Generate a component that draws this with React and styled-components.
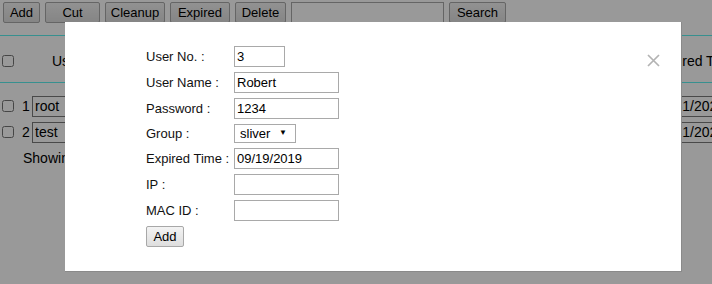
import React from "react";
import styled, { createGlobalStyle } from "styled-components";

const GlobalStyle = createGlobalStyle`
  html, body {
    margin: 0;
    padding: 0;
    background: #fff;
    overflow: hidden;
  }
  body {
    font-family: "Liberation Sans", Arial, sans-serif;
    font-size: 13px;
    color: #000;
  }
  * {
    box-sizing: border-box;
  }
`;

const users = [
  { no: 1, name: "root", expired: "12/31/2020" },
  { no: 2, name: "test", expired: "12/31/2020" },
];

const App = () => {
  return (
    <>
      <GlobalStyle />
      <Page>
        <Toolbar>
          <Button $w={37}>Add</Button>
          <Button $w={55}>Cut</Button>
          <Button $w={60}>Cleanup</Button>
          <Button $w={60}>Expired</Button>
          <Button $w={51}>Delete</Button>
          <SearchInput defaultValue="" />
          <Button $w={57}>Search</Button>
        </Toolbar>
        <UserTable>
          <HeaderRow>
            <CheckCell>
              <Check type="checkbox" />
            </CheckCell>
            <NoCell />
            <NameHead>User Name</NameHead>
            <Filler>Password</Filler>
            <ExpiredHead>Expired Time</ExpiredHead>
          </HeaderRow>
          <Body>
            {users.map((u) => (
              <Row key={u.no}>
                <CheckCell>
                  <Check type="checkbox" />
                </CheckCell>
                <NoCell>{u.no}</NoCell>
                <NameCell>
                  <CellInput defaultValue={u.name} />
                </NameCell>
                <Filler />
                <ExpiredCell>
                  <CellInput defaultValue={u.expired} />
                </ExpiredCell>
              </Row>
            ))}
          </Body>
          <Info>Showing 1 to 2</Info>
        </UserTable>
      </Page>
      <Overlay>
        <Modal>
          <Close aria-label="close">
            <svg width="13" height="13" viewBox="0 0 13 13">
              <path d="M1 1 L12 12 M12 1 L1 12" stroke="#b3b3b3" strokeWidth="1.7" />
            </svg>
          </Close>
          <Form>
            <Field>
              <Label>User No. :</Label>
              <Input $w={51} defaultValue="3" />
            </Field>
            <Field>
              <Label>User Name :</Label>
              <Input defaultValue="Robert" />
            </Field>
            <Field>
              <Label>Password :</Label>
              <Input defaultValue="1234" />
            </Field>
            <Field>
              <Label>Group :</Label>
              <SelectWrap>
                <Select defaultValue="sliver">
                  <option value="gold">gold</option>
                  <option value="sliver">sliver</option>
                  <option value="bronze">bronze</option>
                </Select>
                <Arrow>▼</Arrow>
              </SelectWrap>
            </Field>
            <Field>
              <Label>Expired Time :</Label>
              <Input defaultValue="09/19/2019" />
            </Field>
            <Field>
              <Label>IP :</Label>
              <Input defaultValue="" />
            </Field>
            <Field>
              <Label>MAC ID :</Label>
              <Input defaultValue="" />
            </Field>
            <Button $w={38}>Add</Button>
          </Form>
        </Modal>
      </Overlay>
    </>
  );
};

export default App;

const Page = styled.div`
  width: 712px;
  height: 284px;
  overflow: hidden;
`;

const Toolbar = styled.div`
  display: flex;
  align-items: center;
  gap: 5px;
  padding: 2px 0 0 3px;
`;

const Button = styled.button`
  width: ${({ $w }) => ($w ? `${$w}px` : "auto")};
  height: 21px;
  padding: 0;
  font-family: "Liberation Sans", Arial, sans-serif;
  font-size: 13px;
  color: #000;
  background: linear-gradient(#f3f3f3, #dedede);
  border: 1px solid #a8a8a8;
  border-radius: 2px;
`;

const SearchInput = styled.input`
  width: 153px;
  height: 21px;
  border: 1px solid #a9a9a9;
  background: #fff;
`;

const UserTable = styled.div`
  margin-top: 12px;
  width: 768px;
`;

const HeaderRow = styled.div`
  display: flex;
  align-items: center;
  height: 48px;
  border-top: 1px solid #5cf0ee;
  border-bottom: 1px solid #5cf0ee;
  padding-top: 3px;
`;

const Body = styled.div`
  margin-top: 10px;
`;

const Row = styled.div`
  display: flex;
  align-items: center;
  height: 26px;
`;

const CheckCell = styled.div`
  width: 20px;
  flex-shrink: 0;
  display: flex;
  align-items: center;
`;

const Check = styled.input`
  width: 12px;
  height: 12px;
  margin: 0 0 0 2px;
`;

const NoCell = styled.div`
  width: 12px;
  flex-shrink: 0;
  padding-left: 2px;
  font-size: 14px;
`;

const NameHead = styled.div`
  width: 100px;
  flex-shrink: 0;
  padding-left: 20px;
  font-size: 14px;
`;

const NameCell = styled.div`
  width: 100px;
  flex-shrink: 0;
`;

const Filler = styled.div`
  flex: 1;
  text-align: center;
  font-size: 14px;
`;

const ExpiredHead = styled.div`
  width: 116px;
  flex-shrink: 0;
  padding-left: 3px;
  font-size: 14px;
  white-space: nowrap;
`;

const ExpiredCell = styled.div`
  width: 116px;
  flex-shrink: 0;
`;

const CellInput = styled.input`
  width: 100%;
  height: 21px;
  padding: 0 2px;
  font-family: "Liberation Sans", Arial, sans-serif;
  font-size: 14px;
  color: #000;
  border: 1px solid #7a7a7a;
  background: #fff;
`;

const Info = styled.div`
  margin-top: 5px;
  padding-left: 23px;
  font-size: 14px;
`;

const Overlay = styled.div`
  position: fixed;
  inset: 0;
  background: rgba(0, 0, 0, 0.4);
`;

const Modal = styled.div`
  position: absolute;
  left: 65px;
  top: 22px;
  width: 617px;
  height: 250px;
  background: #fff;
  border: 1px solid #8a8a8a;
  border-top: none;
  border-left: none;
`;

const Close = styled.span`
  position: absolute;
  top: 32px;
  right: 21px;
  width: 13px;
  height: 13px;
  display: flex;
`;

const Form = styled.div`
  padding: 24px 0 0 81px;
`;

const Field = styled.div`
  display: flex;
  align-items: center;
  margin-bottom: 5px;
`;

const Label = styled.div`
  width: 88px;
  font-size: 13px;
  color: #111;
  white-space: nowrap;
`;

const Input = styled.input`
  width: ${({ $w }) => ($w ? `${$w}px` : "105px")};
  height: 21px;
  padding: 0 2px;
  font-family: "Liberation Sans", Arial, sans-serif;
  font-size: 13px;
  color: #000;
  border: 1px solid #a9a9a9;
  background: #fff;
  outline: none;
`;

const SelectWrap = styled.span`
  position: relative;
  display: inline-block;
`;

const Select = styled.select`
  appearance: none;
  width: 62px;
  height: 19px;
  padding: 0 0 0 5px;
  font-family: "Liberation Sans", Arial, sans-serif;
  font-size: 13px;
  color: #000;
  border: 1px solid #a9a9a9;
  border-radius: 0;
  background: #fff;
`;

const Arrow = styled.span`
  position: absolute;
  right: 9px;
  top: 4px;
  font-size: 8px;
  color: #000;
  pointer-events: none;
`;
